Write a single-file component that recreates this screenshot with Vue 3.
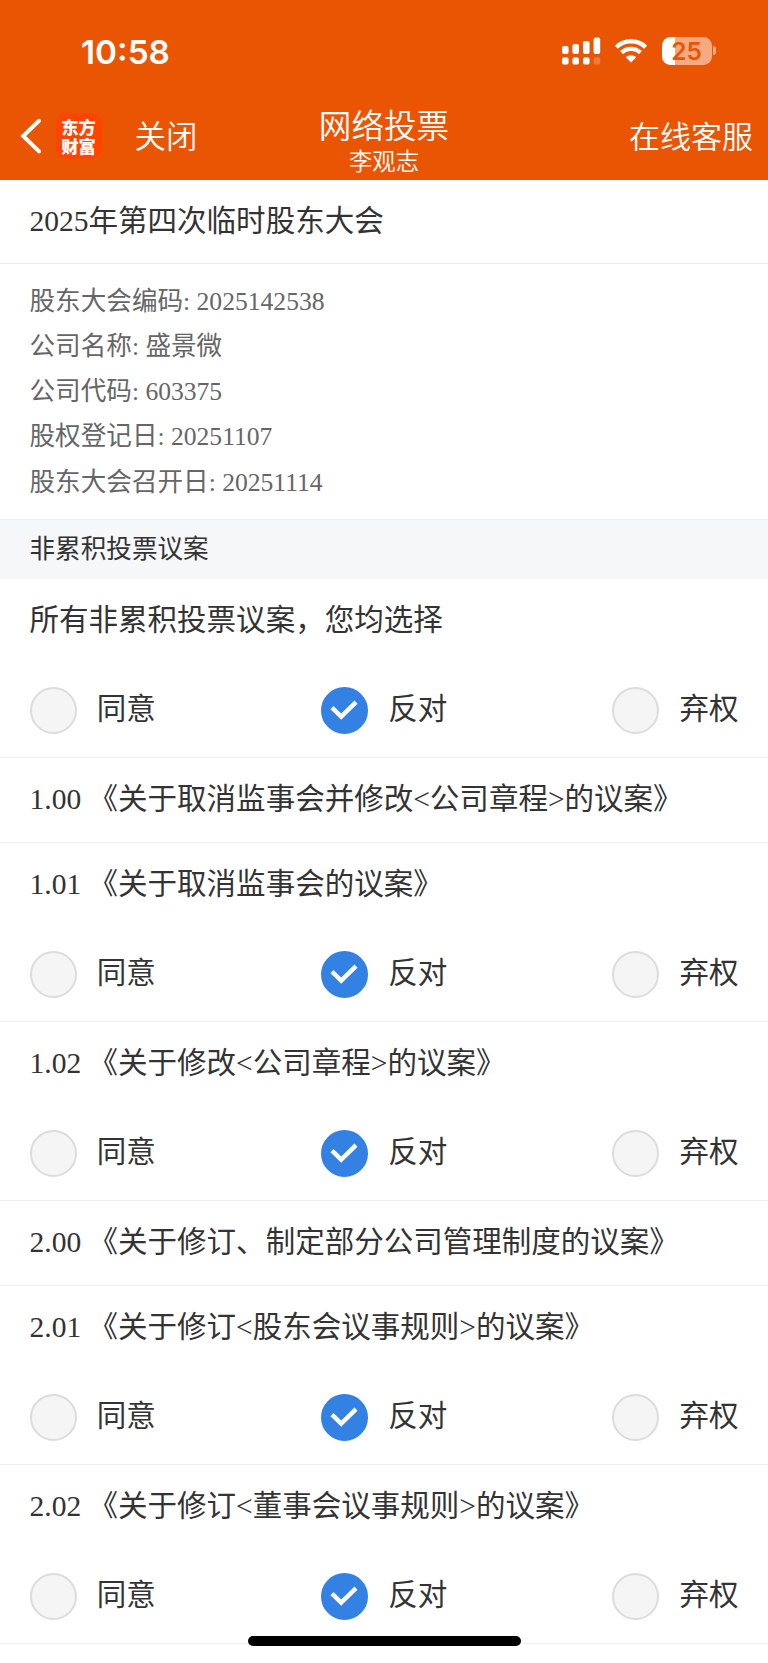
<script setup>
import { reactive } from 'vue'

const choices = ['同意', '反对', '弃权']

const info = [
  { label: '股东大会编码', value: '2025142538' },
  { label: '公司名称', value: '盛景微' },
  { label: '公司代码', value: '603375' },
  { label: '股权登记日', value: '20251107' },
  { label: '股东大会召开日', value: '20251114' }
]

// group headings (1.00, 2.00) have no choice of their own
const proposals = reactive([
  { title: '所有非累积投票议案，您均选择', vote: '反对' },
  { title: '1.00 《关于取消监事会并修改<公司章程>的议案》' },
  { title: '1.01 《关于取消监事会的议案》', vote: '反对' },
  { title: '1.02 《关于修改<公司章程>的议案》', vote: '反对' },
  { title: '2.00 《关于修订、制定部分公司管理制度的议案》' },
  { title: '2.01 《关于修订<股东会议事规则>的议案》', vote: '反对' },
  { title: '2.02 《关于修订<董事会议事规则>的议案》', vote: '反对' }
])
</script>

<template>
  <div class="page">
    <header class="header">
      <div class="status-bar">
        <span class="time">10:58</span>
        <div class="status-icons">
          <svg class="signal" width="39" height="28" viewBox="0 0 39 28" fill="#fff">
            <rect x="0" y="9" width="6.6" height="8" rx="2" />
            <rect x="10.4" y="7" width="6.6" height="10" rx="2" />
            <rect x="21" y="4" width="6.6" height="13" rx="2" />
            <rect x="31.6" y="0.5" width="6.6" height="16.5" rx="2" />
            <rect x="0" y="20.2" width="6.6" height="7.4" rx="2.2" />
            <rect x="10.4" y="20.2" width="6.6" height="7.4" rx="2.2" />
            <rect x="21" y="20.2" width="6.6" height="7.4" rx="2.2" />
            <rect x="31.6" y="20.2" width="6.6" height="7.4" rx="2.2" opacity="0.22" />
          </svg>
          <svg class="wifi" width="34" height="25" viewBox="0 0 34 25" fill="none" stroke="#fff">
            <path d="M2.3 9.2C10.4 1.2 23.6 1.2 31.7 9.2" stroke-width="4.4" />
            <path d="M7.6 14.6C12.8 9.6 21.2 9.6 26.4 14.6" stroke-width="4.4" />
            <path d="M17 24.4L11.7 19.2C14.7 16.5 19.3 16.5 22.3 19.2Z" fill="#fff" stroke="none" />
          </svg>
          <div class="battery">
            <div class="battery-body"><span>25</span></div>
            <div class="battery-cap"></div>
          </div>
        </div>
      </div>
      <div class="nav">
        <div class="nav-left">
          <svg width="22" height="36" viewBox="0 0 22 36" fill="none" stroke="#fff" stroke-width="4" stroke-linecap="round">
            <path d="M19 2.8L3.2 18L19 33.4" />
          </svg>
          <div class="logo">
            <span>东方</span>
            <span>财富</span>
          </div>
          <span class="close">关闭</span>
        </div>
        <div class="nav-title">
          <div class="main">网络投票</div>
          <div class="sub">李观志</div>
        </div>
        <div class="service">在线客服</div>
      </div>
    </header>

    <h1 class="meeting">2025年第四次临时股东大会</h1>
    <div class="info">
      <p v-for="item in info" :key="item.label">{{ item.label }}: {{ item.value }}</p>
    </div>
    <div class="section">非累积投票议案</div>

    <div v-for="item in proposals" :key="item.title" class="proposal">
      <div class="title">{{ item.title }}</div>
      <div v-if="item.vote" class="options">
        <div v-for="choice in choices" :key="choice" class="option" @click="item.vote = choice">
          <span class="radio" :class="{ checked: item.vote === choice }">
            <svg v-if="item.vote === choice" width="30" height="24" viewBox="0 0 30 24" fill="none" stroke="#fff" stroke-width="4.4">
              <path d="M3 9.6L12.2 18.6L27 4.2" />
            </svg>
          </span>
          <span class="choice">{{ choice }}</span>
        </div>
      </div>
    </div>
    <div class="home-indicator"></div>
  </div>
</template>

<style>
body {
  margin: 0;
  background: #fff;
}
</style>

<style scoped>
.page {
  position: relative;
  width: 768px;
  height: 1663px;
  overflow: hidden;
  background: #fff;
  color: #333;
  font-family: "Liberation Serif", "Noto Sans CJK SC", serif;
  font-size: 29.53px;
  text-spacing-trim: space-all;
}

.header {
  height: 179.5px;
  background: #ea5504;
  color: #fff;
  font-family: "Noto Sans CJK SC", sans-serif;
  font-weight: 350;
}

.status-bar {
  display: flex;
  justify-content: space-between;
  height: 102px;
  box-sizing: border-box;
  padding: 0 52.5px 0 81px;
  font-family: Inter, sans-serif;
}

.time {
  line-height: 104px;
  font-size: 33.3px;
  font-weight: 600;
}

.status-icons {
  display: flex;
  align-items: flex-start;
  padding-top: 37px;
}

.wifi {
  margin: 1px 14px 0 13px;
}

.battery {
  display: flex;
  align-items: center;
}

.battery-body {
  width: 50px;
  height: 27.5px;
  border-radius: 8.5px;
  background: linear-gradient(to right, #fff 13px, #f5aa82 13px);
  color: #ea5504;
  font-size: 24.5px;
  font-weight: 600;
  line-height: 28px;
  text-align: center;
}

.battery-cap {
  width: 3px;
  height: 9px;
  margin-left: 1px;
  border-radius: 0 4px 4px 0;
  background: #f5aa82;
}

.nav {
  display: grid;
  grid-template-columns: 1fr auto 1fr;
  height: 77.5px;
  padding: 0 15px;
}

.nav-left {
  display: flex;
  align-items: center;
  height: 68px;
  padding-left: 5px;
}

.logo {
  display: flex;
  flex-direction: column;
  justify-content: center;
  align-items: center;
  width: 46px;
  height: 46px;
  margin: 0 33px 0 13.5px;
  border-radius: 9px;
  background: #ff4400;
  font-size: 17.3px;
  font-weight: 900;
  line-height: 19.5px;
}

.close {
  padding-bottom: 4px;
  font-size: 31.5px;
}

.nav-title {
  text-align: center;
}

.main {
  font-size: 32.6px;
  line-height: 43px;
}

.sub {
  font-size: 23.3px;
  line-height: 30px;
}

.service {
  font-size: 31px;
  line-height: 65px;
  text-align: right;
}

.meeting {
  height: 84px;
  box-sizing: border-box;
  margin: 0;
  padding: 0 29.5px;
  border-bottom: 1px solid #ebebeb;
  font-size: 29.53px;
  font-weight: 400;
  line-height: 82px;
}

.info {
  height: 255px;
  box-sizing: border-box;
  padding: 15px 29.5px 0;
  color: #666;
  font-size: 25.6px;
}

.info p {
  margin: 0;
  line-height: 45.3px;
}

.section {
  height: 60.5px;
  box-sizing: border-box;
  padding: 0 29.5px;
  border-top: 1px solid #eee;
  background: #f6f7f9;
  font-size: 25.6px;
  line-height: 60px;
}

.proposal {
  box-sizing: border-box;
  border-bottom: 1px solid #f0f0f0;
  padding: 0 29.5px;
}

.title {
  height: 83.7px;
  line-height: 83px;
  white-space: nowrap;
}

.options {
  display: flex;
  justify-content: space-between;
  height: 70.5px;
  padding-top: 24px;
}

.option {
  display: flex;
  height: 47.3px;
}

.radio {
  display: flex;
  align-items: center;
  justify-content: center;
  width: 47.3px;
  height: 47.3px;
  box-sizing: border-box;
  margin-right: 20px;
  border: 2px solid #dcdcdc;
  border-radius: 50%;
  background: #f5f5f5;
}

.radio.checked {
  border-color: #3381e3;
  background: #3381e3;
}

.radio svg {
  flex-shrink: 0;
}

.choice {
  line-height: 45px;
}

.home-indicator {
  position: absolute;
  left: 247.5px;
  bottom: 17px;
  width: 273px;
  height: 10px;
  border-radius: 5px;
  background: #000;
}
</style>
